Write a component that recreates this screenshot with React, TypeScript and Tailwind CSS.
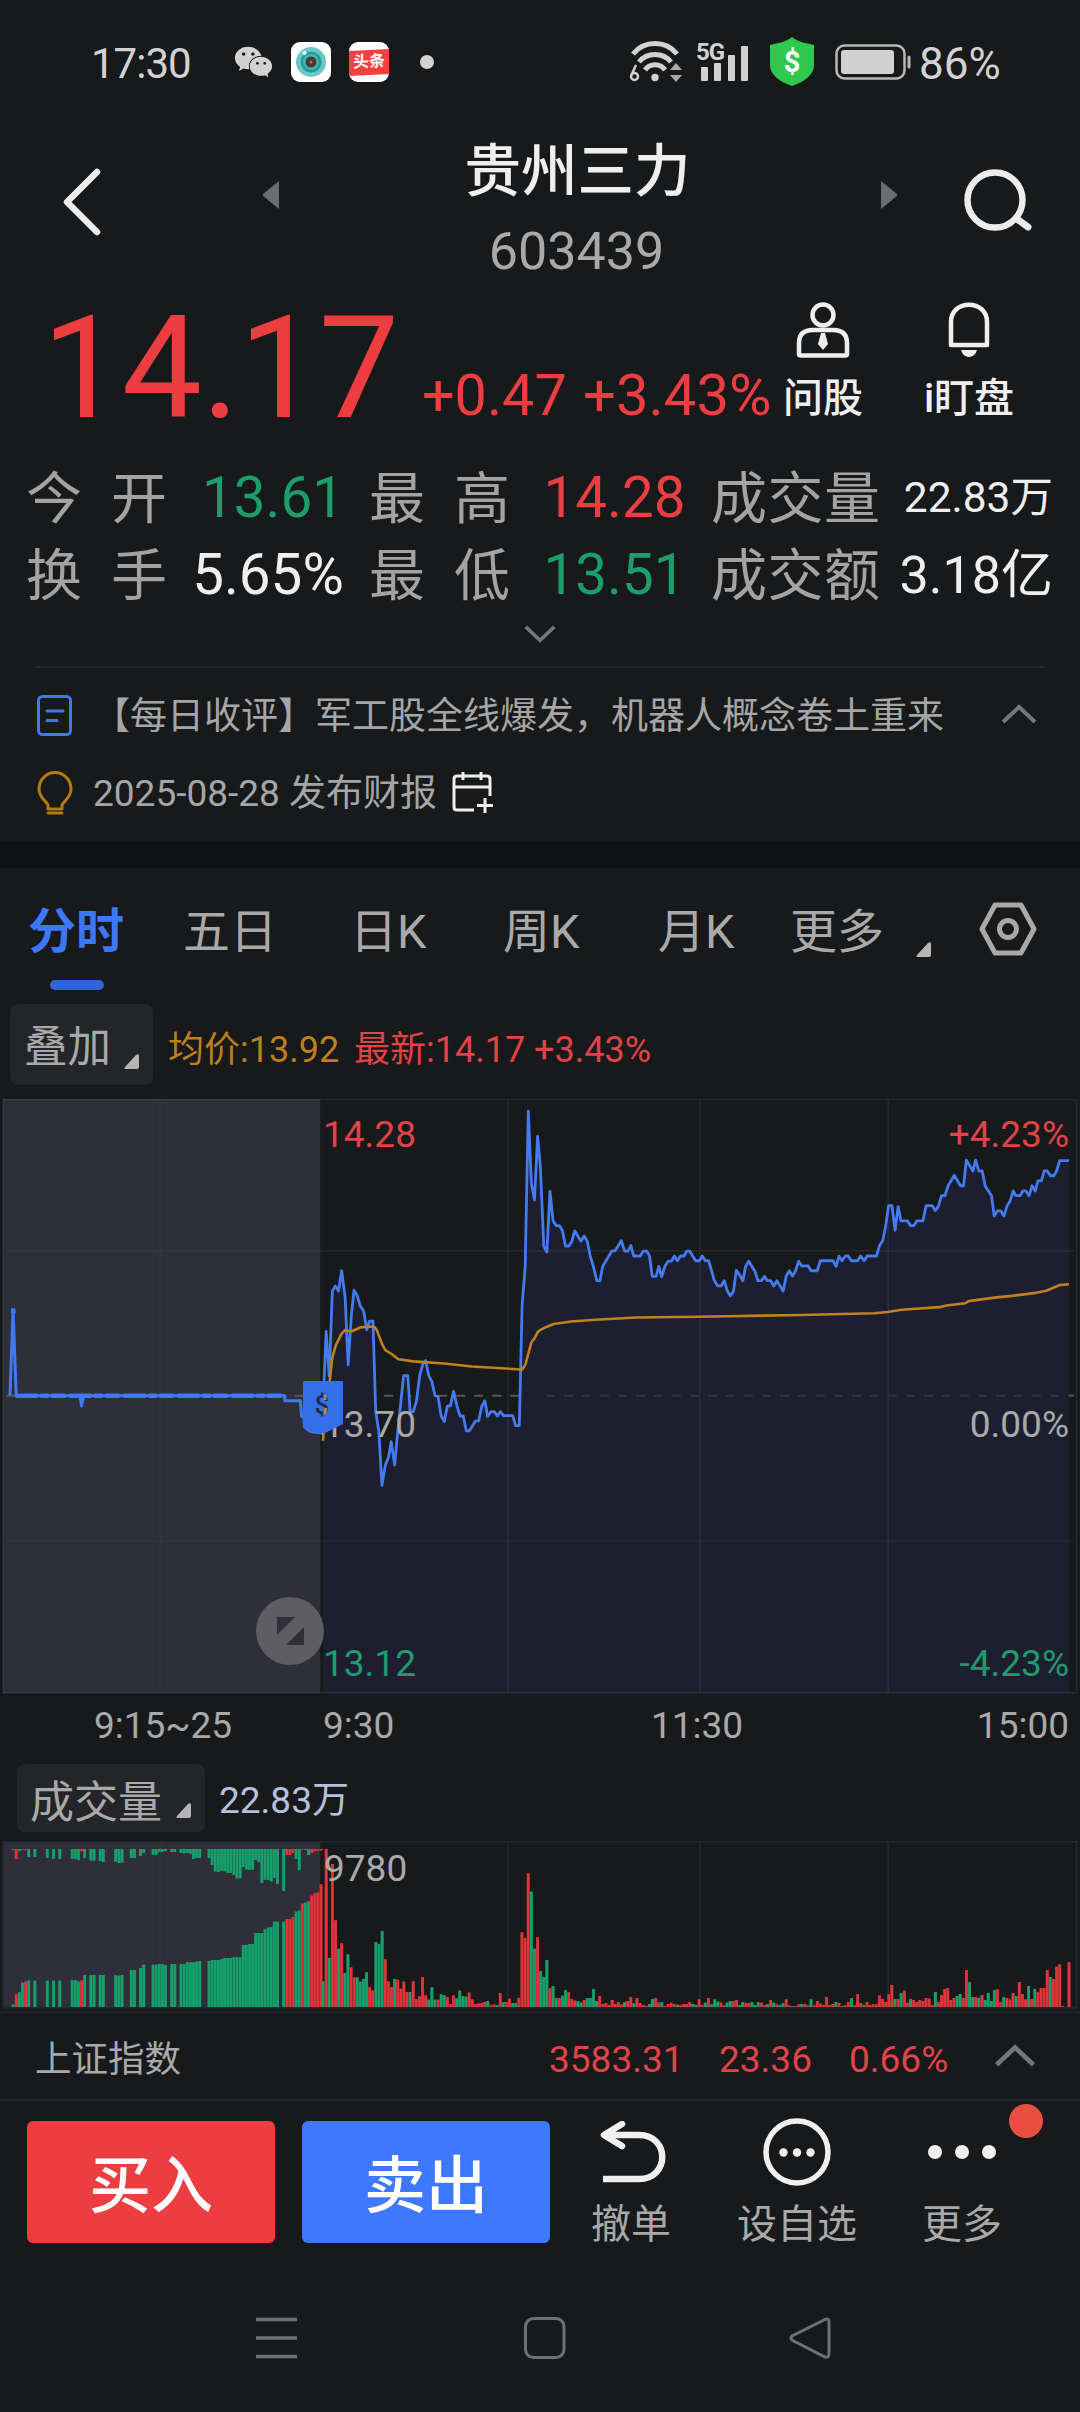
import type { ReactNode } from "react";
import { FaWeixin } from "react-icons/fa";
import clsx from "clsx";

type Point = [number, number];

const shift = (points: Point[], dx: number): Point[] => points.map(([x, y]) => [x + dx, y]);
const toPoints = (points: Point[]) => points.map((p) => p.join(",")).join(" ");

// Price chart units: 3136 across the full width
const HALF = 1568;

const price: Point[] = [
  [938, 752], [947, 580], [956, 683], [965, 487], [974, 475], [983, 487], [992, 440], [1002, 500],
  [1011, 657], [1020, 545], [1028, 485], [1037, 497], [1046, 521], [1056, 533], [1065, 576], [1073, 556],
  [1083, 556], [1091, 765], [1100, 810], [1109, 935], [1119, 888], [1128, 870], [1136, 834], [1146, 888],
  [1155, 810], [1172, 682], [1184, 682], [1191, 765], [1200, 765], [1209, 742], [1219, 680], [1228, 655],
  [1236, 647], [1245, 682], [1254, 695], [1263, 728], [1272, 730], [1281, 775], [1290, 788], [1299, 752],
  [1308, 751], [1317, 718], [1327, 752], [1336, 775], [1345, 775], [1354, 809], [1363, 809], [1380, 787],
  [1390, 786], [1399, 752], [1408, 740], [1416, 776], [1426, 765], [1436, 765], [1444, 775], [1453, 765],
  [1462, 774], [1489, 774], [1497, 797], [1508, 797], [1516, 520], [1525, 430], [1534, 72], [1543, 240],
  [1552, 277], [1561, 130], [1569, 200],
  ...shift(
    [
      [11, 383], [20, 397], [29, 257], [38, 325], [47, 336], [56, 336], [65, 347], [74, 383], [84, 383],
      [92, 373], [101, 348], [119, 372], [128, 360], [137, 371], [146, 407], [155, 430], [165, 463],
      [174, 463], [182, 430], [209, 394], [218, 394], [236, 371], [246, 395], [255, 395], [264, 382],
      [272, 406], [291, 406], [300, 395], [310, 395], [318, 406], [326, 453], [337, 453], [345, 430],
      [353, 454], [363, 429], [372, 418], [382, 418], [390, 406], [399, 417], [408, 406], [418, 406],
      [426, 395], [435, 395], [452, 417], [463, 417], [471, 406], [480, 417], [490, 417], [506, 462],
      [516, 475], [526, 475], [535, 463], [544, 487], [553, 498], [562, 487], [570, 439], [580, 450],
      [589, 463], [597, 430], [606, 418], [624, 441], [633, 463], [643, 463], [652, 453], [660, 463],
      [670, 463], [679, 475], [688, 463], [706, 487], [715, 452], [724, 440], [733, 452], [742, 440],
      [751, 418], [760, 429], [779, 429], [787, 440], [805, 440], [814, 417], [851, 417], [860, 430],
      [868, 406], [877, 417], [887, 406], [895, 406], [904, 417], [922, 417], [931, 406], [941, 417],
      [950, 406], [977, 406], [986, 382], [995, 371], [1004, 336], [1012, 290], [1022, 290], [1031, 347],
      [1040, 292], [1048, 325], [1067, 325], [1076, 336], [1086, 336], [1094, 325], [1112, 325], [1121, 290],
      [1139, 290], [1148, 301], [1157, 291], [1166, 267], [1176, 267], [1185, 244], [1203, 220], [1221, 244],
      [1230, 244], [1238, 185], [1257, 210], [1265, 185], [1274, 210], [1284, 210], [1293, 245], [1311, 267],
      [1319, 314], [1328, 302], [1338, 302], [1347, 314], [1356, 291], [1365, 279], [1374, 256], [1382, 267],
      [1394, 267], [1402, 256], [1411, 256], [1420, 267], [1429, 244], [1438, 256], [1446, 233], [1456, 233],
      [1464, 210], [1473, 210], [1482, 221], [1492, 221], [1500, 210], [1509, 186], [1536, 186],
    ],
    HALF,
  ),
];

const average: Point[] = [
  [938, 832], [941, 790], [958, 690], [965, 640], [975, 612], [992, 585], [1002, 577], [1020, 580],
  [1046, 571], [1065, 569], [1086, 569], [1094, 577], [1110, 610], [1119, 623], [1137, 632], [1157, 644],
  [1200, 649], [1290, 654], [1370, 661], [1500, 667], [1516, 668], [1525, 658], [1543, 605], [1552, 596],
  [1561, 582], [1568, 577],
  ...shift(
    [
      [20, 569], [40, 563], [90, 557], [160, 553], [280, 548], [460, 546], [760, 542], [970, 538],
      [1010, 535], [1050, 530], [1160, 524], [1180, 520], [1235, 515], [1245, 510], [1320, 502],
      [1370, 498], [1440, 491], [1470, 486], [1509, 473], [1536, 471],
    ],
    HALF,
  ),
];

const auction: Point[] = [
  [29, 728], [38, 530], [47, 728], [232, 728], [237, 752], [243, 728], [827, 728], [827, 740],
  [872, 740], [876, 776], [882, 776], [884, 800], [900, 810], [938, 815],
];

// One bar per minute: colour letter and the y of the bar's top (base is 801)
const volume =
  "g724 r327 g654 r372 r541 g626 r610 g699 g643 r682 r712 g712 g725 g717 g697 r742 r752 g606 g612 g573 " +
  "r658 r724 r741 g717 r719 r746 r725 r756 g756 r724 r778 r769 r711 r766 g779 g742 g779 r779 g763 g766 " +
  "r771 r792 r766 g775 g752 g768 g770 r758 r778 r792 r791 r789 r786 g783 r796 r793 g796 r759 g786 r786 " +
  "r776 g789 g789 r774 r577 r594 r400 g455 g626 r592 g693 g711 g660 r745 g738 g774 r774 g767 g751 r757 " +
  "r777 r782 g783 g788 r780 g774 g774 g747 g783 r768 r792 r789 r795 r780 r792 r787 r794 g786 r783 r771 " +
  "g790 r774 r789 r795 r798 g792 g777 r774 r788 g786 r798 r792 r788 r792 g794 r795 r792 r792 r786 g792 " +
  "g795 r778 r795 g788 r774 g793 g778 g785 r788 r796 g788 g783 r783 r780 g796 g786 r789 r789 g786 g795 " +
  "g787 r788 r795 g793 r780 g788 r793 g795 g789 r778 r796 g798 r798 r793 g792 r792 r796 g778 r796 r783 " +
  "r791 r795 r771 r795 r792 g786 r789 g798 r796 r786 g774 r796 r762 r789 g796 r786 r795 r793 r793 r766 " +
  "r777 r786 r762 r735 g777 r777 g759 r752 r788 g777 r780 r786 r780 r783 r774 r776 r795 g756 r786 r765 " +
  "r747 r744 r780 r774 g768 g762 r774 r690 g727 g771 r771 g774 r765 g780 g759 g783 g750 r748 r786 g771 " +
  "r774 r778 r759 g768 r726 r762 r778 g738 r777 g747 r757 r744 r744 r690 g711 r717 r680 r673 r798 r801 r667";

// Call auction bars: slot, colour, top of the lower bar, bottom of the hanging bar
const auctionBars: [number, "r" | "g", number, number][] = [
  [0, "g", 793, 329], [1, "r", 763, 357], [2, "g", 757, 333], [3, "g", 728, 329], [4, "r", 725, 330],
  [5, "g", 722, 351], [7, "g", 722, 351], [11, "g", 722, 354], [13, "g", 722, 356], [15, "g", 722, 357],
  [19, "g", 721, 357], [20, "g", 721, 357], [21, "g", 725, 360], [22, "r", 721, 334], [23, "g", 705, 354],
  [25, "g", 705, 362], [26, "g", 705, 362], [28, "g", 705, 363], [29, "g", 705, 366], [33, "g", 705, 365],
  [34, "g", 707, 369], [35, "g", 705, 368], [38, "g", 690, 354], [39, "g", 690, 354], [41, "g", 684, 348],
  [42, "g", 674, 338], [45, "g", 674, 344], [46, "g", 674, 344], [47, "g", 672, 336], [48, "g", 672, 335],
  [49, "g", 675, 333], [51, "g", 672, 336], [52, "g", 672, 336], [54, "g", 672, 339], [55, "g", 672, 340],
  [56, "g", 667, 339], [57, "g", 667, 341], [58, "g", 667, 357], [59, "g", 665, 354], [60, "g", 663, 354],
  [63, "g", 663, 354], [64, "g", 660, 375], [65, "g", 660, 394], [66, "g", 660, 396], [67, "g", 657, 392],
  [68, "g", 654, 394], [69, "g", 654, 398], [70, "g", 654, 399], [71, "g", 652, 405], [72, "g", 652, 415],
  [73, "g", 652, 415], [74, "g", 615, 381], [75, "g", 615, 388], [76, "g", 612, 389], [77, "g", 612, 389],
  [78, "g", 579, 360], [79, "g", 579, 366], [80, "g", 579, 429], [81, "g", 568, 419], [82, "g", 563, 420],
  [83, "g", 561, 424], [84, "g", 545, 414], [85, "g", 545, 432], [87, "g", 545, 453], [88, "r", 537, 345],
  [89, "r", 537, 345], [90, "r", 531, 339], [91, "g", 515, 357], [92, "g", 512, 390], [93, "r", 491, 329],
  [94, "g", 488, 330], [95, "g", 484, 345], [96, "r", 467, 339], [97, "r", 460, 334], [98, "r", 458, 332],
  [99, "r", 433, 332],
];

const STEP = 9.03;

function Bar({ x, y, bottom, up }: { x: number; y: number; bottom: number; up: boolean }) {
  if (bottom <= y) return null;
  return (
    <>
      <rect x={x - 4.5} y={y} width={STEP} height={bottom - y} fill={up ? "#9c2c31" : "#157a55"} />
      <rect x={x - 3.5} y={y} width={7.4} height={bottom - y} fill={up ? "#e03439" : "#18a06c"} />
    </>
  );
}

function Corner({ className }: { className?: string }) {
  return (
    <svg viewBox="0 0 15 15" className={clsx("h-[15px] w-[15px]", className)}>
      <path d="M1 15 Q0 14 1 13 L12 1 Q15 -1 15 2 V13 Q15 15 13 15Z" fill="#b5b5b5" />
    </svg>
  );
}

function Chevron({ up, className }: { up?: boolean; className?: string }) {
  return (
    <svg viewBox="0 0 36 20" className={className} fill="none" stroke="#757678" strokeWidth="4">
      <path d={up ? "M2 18 L18 3 L34 18" : "M2 2 L18 17 L34 2"} />
    </svg>
  );
}

function StatusBar() {
  return (
    <div className="flex h-[124px] items-center pl-[91px] text-[#d2d2d2]">
      <span className="w-[143px] pt-[3px] text-[42px] leading-none tracking-[-1px]">17:30</span>
      <FaWeixin className="mr-[18px] h-[38px] w-[39px]" />
      <svg viewBox="0 0 40 40" className="mr-[18px] h-10 w-10">
        <rect width="40" height="40" rx="9" fill="#fff" />
        <circle cx="20" cy="20" r="15" fill="#6fc7c1" />
        <circle cx="20" cy="20" r="10.500" fill="#1b9e9c" />
        <circle cx="20" cy="20" r="8" fill="#4bb3ae" />
        <circle cx="20" cy="20" r="5.500" fill="#4a3a38" />
        <circle cx="20" cy="20" r="1.500" fill="#a8794a" />
        <circle cx="13.500" cy="11" r="2" fill="#fff" />
      </svg>
      <div className="mr-[31px] flex h-10 w-10 items-center overflow-hidden rounded-[9px] bg-white">
        <div className="h-[25px] w-10 -skew-y-3 bg-[#f5413e] text-center text-[16px] leading-[24px] font-bold text-white">
          头条
        </div>
      </div>
      <span className="mr-[195px] h-3.5 w-3.5 rounded-full bg-[#d2d2d2]" />
      <svg viewBox="0 0 54 42" className="mr-[13px] h-[42px] w-[54px]" fill="none" stroke="#d2d2d2">
        <path d="M4 13 C15 -1 37 -1 48 13" strokeWidth="5" />
        <path d="M10 21 C18 11 34 11 42 21" strokeWidth="5" />
        <path d="M16 29 C21 22 31 22 36 29" strokeWidth="5" />
        <circle cx="26" cy="36.500" r="3.700" fill="#d2d2d2" stroke="none" />
        <circle cx="5.500" cy="35.500" r="3.500" strokeWidth="2.500" />
        <path d="M2.500 34 L7 24" strokeWidth="2.500" />
        <path d="M41 29 L47 22 L53 29Z M41 34 L47 41 L53 34Z" fill="#a8a8a8" stroke="none" />
      </svg>
      <div className="relative mr-5 h-[42px] w-[53px]">
        <span className="absolute -top-px left-0 text-[24px] leading-none font-bold tracking-[-1px]">5G</span>
        <svg viewBox="0 0 53 42" className="h-full w-full" fill="#d2d2d2">
          <rect x="5" y="26" width="7" height="14" rx="1" />
          <rect x="18" y="22" width="7" height="18" rx="1" />
          <rect x="32" y="14" width="7" height="26" rx="1" />
          <rect x="45" y="5" width="7" height="35" rx="1" />
        </svg>
      </div>
      <svg viewBox="0 0 46 50" className="mr-5 h-[50px] w-[46px]">
        <path d="M23 0 C29 5 37 6 45 8 V28 C45 38 35 45 23 49 C11 45 1 38 1 28 V8 C9 6 17 5 23 0Z" fill="#30c84e" />
        <text x="23" y="34.500" textAnchor="middle" fontSize="29" fontWeight="700" fill="#fff">$</text>
      </svg>
      <svg viewBox="0 0 77 36" className="mr-[7px] h-9 w-[77px]" fill="none">
        <rect x="1.500" y="1.500" width="68" height="33" rx="8" stroke="#b8b8b8" strokeWidth="2.500" />
        <rect x="6" y="6" width="53" height="24" rx="3" fill="#d2d2d2" />
        <path d="M74 13 V23" stroke="#b8b8b8" strokeWidth="3" strokeLinecap="round" />
      </svg>
      <span className="pt-[3px] text-[44px] leading-none">86%</span>
    </div>
  );
}

function Header() {
  return (
    <header className="flex h-[166px] items-start">
      <svg viewBox="0 0 40 68" className="mt-11 ml-[62px] h-[68px] w-10" fill="none">
        <path d="M35 4 L5 34 L35 64" stroke="#ececec" strokeWidth="6.500" strokeLinecap="round" strokeLinejoin="round" />
      </svg>
      <svg viewBox="0 0 17 28" className="mt-[57px] ml-[160px] h-7 w-[17px]">
        <path d="M17 0 L1 13 Q0 14 1 15 L17 28Z" fill="#6c6d6e" />
      </svg>
      <div className="flex w-[601px] flex-col items-center pt-5 pr-[4px]">
        <h1 className="text-[56.500px] leading-none font-medium text-[#efefef]">贵州三力</h1>
        <span className="mt-[25px] pr-0.5 text-[52px] leading-none text-[#a9a9a9]">603439</span>
      </div>
      <svg viewBox="0 0 17 28" className="mt-[57px] ml-px h-7 w-[17px]">
        <path d="M0 0 L16 13 Q17 14 16 15 L0 28Z" fill="#6c6d6e" />
      </svg>
      <svg viewBox="0 0 70 64" className="mt-11 ml-[66px] h-16 w-[70px]" fill="none" stroke="#ececec">
        <circle cx="31" cy="32" r="27.500" strokeWidth="6.500" />
        <path d="M53 51 L64 59" strokeWidth="7" strokeLinecap="round" />
      </svg>
    </header>
  );
}

function Quote() {
  return (
    <section className="flex h-[166px] text-[#ec3d41]">
      <div className="flex w-[780px] items-baseline pt-[7px] pl-[42px] whitespace-nowrap">
        <span className="w-[380px] text-[143px] leading-none tracking-[-0.5px]">14.17</span>
        <span className="relative -top-0.5 w-[161px] text-[57.500px] leading-none">+0.47</span>
        <span className="relative -top-0.5 text-[58px] leading-none">+3.43%</span>
      </div>
      <div className="flex w-[86px] flex-col items-center pt-3 text-[#efefef]">
        <svg viewBox="0 0 54 56" className="h-14 w-[54px]" fill="none" stroke="#efefef" strokeWidth="4.500">
          <circle cx="27" cy="13" r="10.500" />
          <path d="M3 52 V41 Q3 28 17 28 H37 Q51 28 51 41 V52 Q51 53.500 49 53.500 H5 Q3 53.500 3 52Z" />
          <path d="M25 31 H29 L32 42 L27 48 L22 42Z" fill="#efefef" stroke="none" />
        </svg>
        <span className="mt-[21px] text-[40px] leading-none font-medium">问股</span>
      </div>
      <div className="ml-[57px] flex w-[92px] flex-col items-center pt-3 text-[#efefef]">
        <svg viewBox="0 0 42 56" className="h-14 w-[42px]" fill="none">
          <path d="M3 43 V20 C3 -3 39 -3 39 20 V43Z" stroke="#efefef" strokeWidth="4.500" strokeLinejoin="round" />
          <path d="M13 48 H29 Q27 55 21 55 Q15 55 13 48Z" fill="#efefef" />
        </svg>
        <span className="mt-[21px] text-[40px] leading-none font-medium">i盯盘</span>
      </div>
    </section>
  );
}

const stats = [
  [
    { label: ["今", "开"], value: "13.61", color: "text-[#1b9e6b] pl-2.5" },
    { label: ["最", "高"], value: "14.28", color: "text-[#ec3d41] pl-2" },
    { label: ["成", "交", "量"], value: "22.83万", color: "text-[#efefef] text-[42.500px]" },
  ],
  [
    { label: ["换", "手"], value: "5.65%", color: "text-[#efefef]" },
    { label: ["最", "低"], value: "13.51", color: "text-[#1b9e6b] pl-2" },
    { label: ["成", "交", "额"], value: "3.18亿", color: "text-[#efefef] text-[52px]" },
  ],
];

const labelWidths = ["w-[141px]", "w-[141px]", "w-[169px]"];
const cellWidths = ["w-[343px]", "w-[342px]", "w-[342px]"];
const valueAligns = ["text-center", "text-center", "text-right"];

function Stats() {
  return (
    <section className="h-[210px] pt-1 pl-[26px]">
      {stats.map((row, r) => (
        <div key={r} className="flex h-[77px] items-center text-[56.500px] leading-none">
          {row.map((cell, i) => (
            <div key={cell.value} className={clsx("flex items-center", cellWidths[i])}>
              <div className={clsx("flex shrink-0 justify-between text-[56px] text-[#a3a3a3]", labelWidths[i])}>
                {cell.label.map((ch) => (
                  <span key={ch}>{ch}</span>
                ))}
              </div>
              <span className={clsx("flex-1 whitespace-nowrap", valueAligns[i], cell.color)}>{cell.value}</span>
            </div>
          ))}
        </div>
      ))}
      <Chevron className="mt-[11px] ml-[498px] h-[18px] w-8" />
    </section>
  );
}

function News() {
  return (
    <section className="mx-[35px] h-[175px] border-t-2 border-[#232527] text-[37px] leading-none text-[#a6a6a6]">
      <div className="flex h-[96px] items-center">
        <svg viewBox="0 0 36 42" className="ml-0.5 h-[42px] w-9" fill="none" stroke="#4576e6" strokeWidth="3">
          <rect x="1.500" y="1.500" width="32" height="38" rx="4" />
          <path d="M10 16 H26 M10 25.500 H20" strokeLinecap="round" />
        </svg>
        <span className="ml-5 w-[851px] whitespace-nowrap">【每日收评】军工股全线爆发，机器人概念卷土重来</span>
        <Chevron up className="-mt-1 ml-[57px] h-5 w-9" />
      </div>
      <div className="flex h-[58px] items-center">
        <svg viewBox="0 0 36 44" className="ml-0.5 h-11 w-9" fill="none" stroke="#b27a17" strokeWidth="3">
          <path d="M11 38 V34 C11 32 2 27 2 18 A16 16.500 0 0 1 34 18 C34 27 25 32 25 34 V38Z" strokeLinejoin="round" />
          <path d="M11 42 H25" strokeLinecap="round" />
        </svg>
        <span className="ml-5 whitespace-nowrap">2025-08-28 发布财报</span>
        <svg viewBox="0 0 42 42" className="ml-[15px] h-[42px] w-[42px]" fill="none" stroke="#efefef" strokeWidth="3">
          <path d="M22 38 H5 Q2 38 2 35 V7 Q2 4 5 4 H35 Q38 4 38 7 V24 M2 15 H38 M11 0 V8 M29 0 V8 M33 26 V41 M25 33.500 H41" />
        </svg>
      </div>
    </section>
  );
}

const tabs = [
  { name: "五日", width: "w-[167px]" },
  { name: "日K", width: "w-[153px]" },
  { name: "周K", width: "w-[155px]" },
  { name: "月K", width: "w-[132px]" },
  { name: "更多", width: "w-[126px]" },
];

function Tabs() {
  return (
    <nav className="flex h-[136px] text-[47px] leading-none text-[#a9a9a9]">
      <div className="ml-[28px] flex w-[155px] flex-col pt-10">
        <span className="text-[48px] font-bold text-[#3e78fa]">分时</span>
        <span className="mt-6 ml-[22px] h-2.5 w-[54px] rounded-full bg-[#3065d6]" />
      </div>
      {tabs.map((tab) => (
        <span key={tab.name} className={clsx("pt-10 whitespace-nowrap", tab.width)}>
          {tab.name}
        </span>
      ))}
      <Corner className="mt-[74px]" />
      <svg viewBox="0 0 58 54" className="mt-[34px] ml-12 h-[54px] w-[58px]" fill="none" stroke="#a9a9a9" strokeWidth="5">
        <path d="M16 3 H42 L55 27 L42 51 H16 L3 27Z" strokeLinejoin="round" />
        <circle cx="29" cy="27" r="8.500" />
      </svg>
    </nav>
  );
}

function AxisLabel({ className, children }: { className: string; children: ReactNode }) {
  return <span className={clsx("absolute text-[37px] leading-none", className)}>{children}</span>;
}

function PriceChart() {
  return (
    <div className="relative h-[595px]">
      <svg viewBox="0 44 3136 1372" preserveAspectRatio="none" className="h-full w-full" fill="none">
        <rect x="9" y="44" width="921" height="1370" fill="#2f2f3b" />
        <path d="M18 728 H3100" stroke="#53565c" strokeWidth="2" strokeDasharray="9 9" vectorEffect="non-scaling-stroke" />
        <path d={`M938 1414 L${toPoints(price)} V1414Z`} fill="#1d1e2f" />
        <g stroke="#fff" strokeOpacity="0.065" strokeWidth="1.500">
          <path vectorEffect="non-scaling-stroke" d="M9 45 H3126 V1413 H9Z" />
          <path vectorEffect="non-scaling-stroke" d="M932 394 H3118 M1475 44 V1413 M2032 44 V1413 M2579 44 V1413" />
          <path vectorEffect="non-scaling-stroke" d="M932 1063 H3118" strokeOpacity="0.04" />
        </g>
        <path
          vectorEffect="non-scaling-stroke"
          stroke="#35353b"
          strokeWidth="1.500"
          d="M18 394 H930 M18 1063 H930 M465 44 V1413"
        />
        {/* Zero line, fainter where the area fill covers it */}
        <path
          vectorEffect="non-scaling-stroke"
          stroke="#33354a"
          strokeWidth="2"
          strokeDasharray="9 9"
          d="M1585 728 H3104"
        />
        <path vectorEffect="non-scaling-stroke" stroke="#53565c" strokeWidth="2" d="M3104 728 H3118" />
        <g strokeWidth="3" strokeLinejoin="round">
          <polyline vectorEffect="non-scaling-stroke" points={toPoints(auction)} stroke="#3f79f0" />
          <path vectorEffect="non-scaling-stroke" d="M45 728 H827" stroke="#3f79f0" strokeWidth="4.500" strokeDasharray="22 3 8 3 14 4" />
          <polyline vectorEffect="non-scaling-stroke" points={toPoints(price)} stroke="#447bee" strokeWidth="2.800" />
          <polyline vectorEffect="non-scaling-stroke" points={toPoints(average)} stroke="#c0821f" strokeWidth="2.600" />
        </g>
        <rect x="32" y="527" width="13" height="11" fill="#3f79f0" />
      </svg>
      <AxisLabel className="top-[17px] left-[323px] text-[#e04348]">14.28</AxisLabel>
      <AxisLabel className="top-[17px] right-[11px] text-[#e04348]">+4.23%</AxisLabel>
      <AxisLabel className="top-[307px] left-[323px] text-[#a9a9a9]">13.70</AxisLabel>
      <AxisLabel className="top-[307px] right-[11px] text-[#a9a9a9]">0.00%</AxisLabel>
      <AxisLabel className="top-[546px] left-[323px] text-[#1e9c6d]">13.12</AxisLabel>
      <AxisLabel className="top-[546px] right-[11px] text-[#1e9c6d]">-4.23%</AxisLabel>
      {/* Trade marker at the open */}
      <svg viewBox="0 0 40 54" className="absolute top-[282px] left-[303px] h-[54px] w-10">
        <path d="M1 0 H39 Q40 0 40 1 V43 L22 52 H16 L0 45 V1 Q0 0 1 0Z" fill="#3470e8" />
        <text x="19" y="33" textAnchor="middle" fontSize="26" fontWeight="500" fill="#1f2b49">$</text>
        <path d="M22 14 V19 M23 27 L21.500 33" stroke="#b8883c" strokeWidth="3" />
      </svg>
      <svg viewBox="0 0 68 68" className="absolute top-[498px] left-[256px] h-[68px] w-[68px]">
        <circle cx="34" cy="34" r="34" fill="#5e5e60" />
        <path d="M22 20 H39 L21 38 V21 Q21 20 22 20Z M48 30 V47 Q48 48 47 48 H30Z" fill="#302f3b" />
      </svg>
    </div>
  );
}

function VolumeChart() {
  return (
    <div className="relative h-[172px] border-b-2 border-[#222426]">
      <svg viewBox="0 303 3136 504" preserveAspectRatio="none" className="h-[168px] w-full" fill="none">
        <rect x="9" y="305" width="921" height="498" fill="#2f2f3b" />
        <g stroke="#27282a" strokeWidth="1.600">
          <path vectorEffect="non-scaling-stroke" d="M9 305 H3126 V804 H9Z M1475 305 V804 M2032 305 V804 M2579 305 V804" />
          <path vectorEffect="non-scaling-stroke" d="M465 305 V804" stroke="#35353b" />
        </g>
        {auctionBars.map(([slot, color, top, hang]) => (
          <g key={slot}>
            <Bar x={38 + slot * STEP} y={top} bottom={801} up={color === "r"} />
            <Bar x={38 + slot * STEP} y={327} bottom={hang} up={color === "r"} />
          </g>
        ))}
        {volume.split(" ").map((bar, i) => (
          <Bar key={i} x={938 + i * 9.025} y={Number(bar.slice(1))} bottom={801} up={bar[0] === "r"} />
        ))}
      </svg>
      <AxisLabel className="top-[9px] left-[324px] text-[#a9a9a9]">9780</AxisLabel>
    </div>
  );
}

function IndexBar() {
  return (
    <div className="flex h-[88px] items-center border-b-2 border-[#222426] pt-1.5 pl-[35px] text-[37px] leading-none">
      <span className="w-[514px] pt-0.5 text-[36.500px] text-[#a9a9a9]">上证指数</span>
      <div className="flex w-[445px] text-[#e04348]">
        <span className="w-[170px]">3583.31</span>
        <span className="w-[130px]">23.36</span>
        <span>0.66%</span>
      </div>
      <Chevron up className="-mt-2 h-[23px] w-[42px]" />
    </div>
  );
}

function Actions() {
  return (
    <div className="relative flex h-[170px] pt-5 pl-[27px] text-[40px] leading-none text-[#a9a9a9]">
      <button className="h-[122px] w-[248px] rounded-md bg-[#ec3d41] pt-2.5 text-[62px] font-medium text-white">买入</button>
      <button className="ml-[27px] h-[122px] w-[248px] rounded-md bg-[#3e78ff] pt-2.5 text-[62px] font-medium text-white">卖出</button>
      <div className="ml-[41px] flex w-20 flex-col items-center">
        <svg viewBox="0 0 66 62" className="ml-1 h-[62px] w-[66px]" fill="none" stroke="#efefef" strokeWidth="6.500">
          <path d="M22 3 L4 14 L22 25" strokeLinecap="round" strokeLinejoin="round" />
          <path d="M4 14 H39 C70 14 70 58 39 58 H3" />
        </svg>
        <span className="mt-[22px]">撤单</span>
      </div>
      <div className="ml-[66px] flex w-[120px] flex-col items-center">
        <svg viewBox="0 0 68 68" className="-mt-[3px] h-[68px] w-[68px]" fill="#efefef">
          <circle cx="34" cy="34" r="31" fill="none" stroke="#efefef" strokeWidth="5.500" />
          <circle cx="20.500" cy="34.500" r="4.200" />
          <circle cx="34" cy="34.500" r="4.200" />
          <circle cx="47.500" cy="34.500" r="4.200" />
        </svg>
        <span className="mt-[19px] whitespace-nowrap">设自选</span>
      </div>
      <div className="ml-[65px] flex w-20 flex-col items-center">
        <div className="flex h-[62px] items-center gap-[13px]">
          <i className="h-3.5 w-3.5 rounded-full bg-[#efefef]" />
          <i className="h-3.5 w-3.5 rounded-full bg-[#efefef]" />
          <i className="h-3.5 w-3.5 rounded-full bg-[#efefef]" />
        </div>
        <span className="mt-[22px]">更多</span>
      </div>
      <span className="absolute top-[3px] left-[1009px] h-[34px] w-[34px] rounded-full bg-[#e84f41]" />
    </div>
  );
}

function SystemNav() {
  return (
    <div className="flex pt-[46px] pl-[256px]">
      <svg viewBox="0 0 42 42" className="h-[42px] w-[42px]" stroke="#6f7072" strokeWidth="3.500">
        <path d="M0 2.500 H41 M0 21 H41 M0 39.500 H41" />
      </svg>
      <svg viewBox="0 0 42 42" className="ml-[226px] h-[42px] w-[42px]" fill="none" stroke="#6f7072" strokeWidth="3">
        <rect x="1.500" y="1.500" width="38.500" height="39" rx="8" />
      </svg>
      <svg viewBox="0 0 42 42" className="ml-[223px] h-[42px] w-[42px]" fill="none" stroke="#6f7072" strokeWidth="3">
        <path d="M36 2.500 L3 19 Q1 21 3 23 L36 40 Q40 41 40 37 V5 Q40 1 36 2.500Z" />
      </svg>
    </div>
  );
}

export default function App() {
  return (
    <main className="h-[2412px] w-[1080px] overflow-hidden bg-[#17191a] font-['Roboto','Noto_Sans_CJK_SC',sans-serif]">
      <StatusBar />
      <Header />
      <Quote />
      <Stats />
      <News />
      <div className="h-[27px] bg-[#111214]" />
      <Tabs />
      <div className="flex h-[95px] items-start text-[37px] leading-none">
        <div className="ml-2.5 flex h-[81px] w-[143px] items-center rounded-lg bg-[#242528] pl-[14px] text-[43.500px] text-[#a9a9a9]">
          <span className="pt-1.5">叠加</span>
          <Corner className="mt-[34px] ml-[13px]" />
        </div>
        <span className="mt-7 ml-[15px] w-[186px] text-[36px] text-[#bd7f1d]">均价:13.92</span>
        <span className="mt-7 text-[36px] text-[#e04348]">最新:14.17 +3.43%</span>
      </div>
      <PriceChart />
      <div className="flex h-[70px] pt-[13px] text-[37px] leading-none text-[#a9a9a9]">
        <span className="ml-[94px] w-[229px]">9:15~25</span>
        <span className="w-[328px]">9:30</span>
        <span className="flex-1">11:30</span>
        <span className="pr-[11px]">15:00</span>
      </div>
      <div className="flex h-[77px] items-start">
        <div className="ml-[17px] flex h-[68px] w-[188px] items-center rounded-lg bg-[#242528] pl-[13px] text-[44px] leading-none text-[#a9a9a9]">
          <span className="pt-2.5">成交量</span>
          <Corner className="mt-[24px] ml-[14px]" />
        </div>
        <span className="mt-[18px] ml-[14px] text-[37px] leading-none text-[#b4c0dc]">22.83万</span>
      </div>
      <VolumeChart />
      <IndexBar />
      <Actions />
      <SystemNav />
    </main>
  );
}
